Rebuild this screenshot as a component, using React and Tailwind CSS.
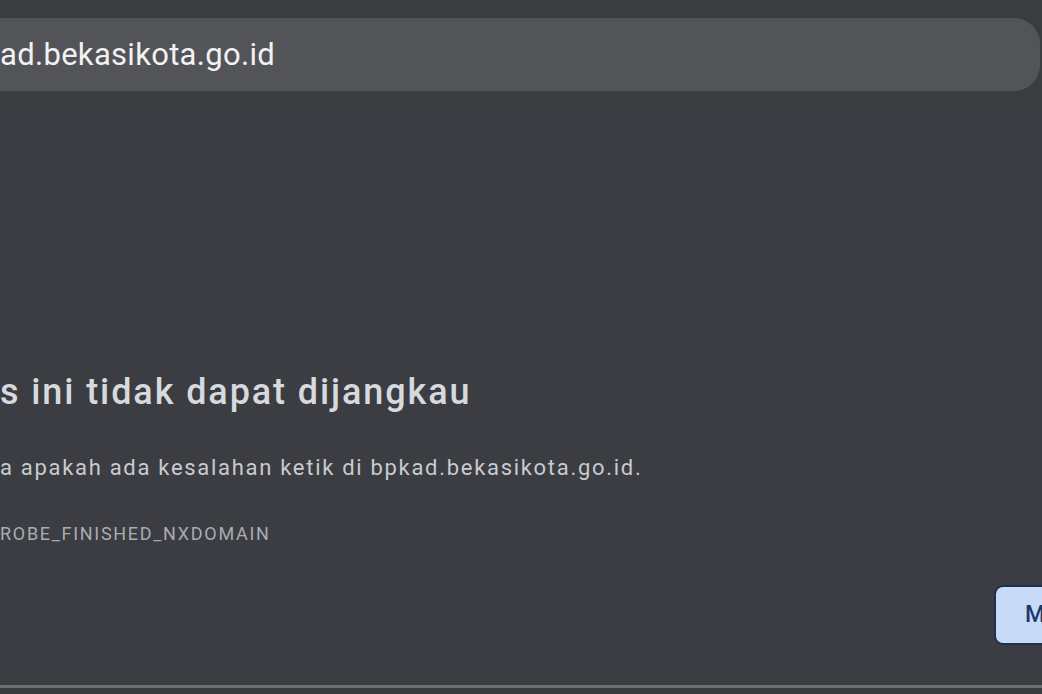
export default function App() {
  return (
    <div
      className="flex h-[694px] w-[1042px] flex-col overflow-hidden bg-[#3c3d43]"
      style={{ fontFamily: "Roboto, 'Noto Sans', sans-serif" }}
    >
      {/* toolbar with the address bar, cut off on the left */}
      <div className="bg-[#3a3d3e] pb-[9px] pt-[18px]">
        <div className="mr-[2px] flex h-[73px] items-center rounded-r-[26px] bg-[#535458]">
          <span className="whitespace-nowrap text-[31px] leading-none tracking-[0.3px] text-[#f1f2f3]">
            ad.bekasikota.go.id
          </span>
        </div>
      </div>

      {/* error page body */}
      <main className="flex flex-1 flex-col">
        <h1 className="mt-[270px] whitespace-nowrap text-[36px] font-medium leading-[44px] tracking-[1.9px] text-[#d6d9dd]">
          s ini tidak dapat dijangkau
        </h1>
        <p className="mt-[40px] whitespace-nowrap text-[22px] leading-[28px] tracking-[1.7px] text-[#c8cbcf]">
          a apakah ada kesalahan ketik di bpkad.bekasikota.go.id.
        </p>
        <p className="mt-[41px] whitespace-nowrap text-[18px] leading-[22px] tracking-[1.7px] text-[#a9acb1]">
          ROBE_FINISHED_NXDOMAIN
        </p>

        <div className="mt-[40px] flex justify-end">
          <button className="-mr-[40px] flex h-[60px] w-[88px] items-center rounded-[9px] border-2 border-[#20304f] bg-[#c8daf6] pl-[29px] text-[23px] font-medium text-[#1b3a6b]">
            M
          </button>
        </div>

        <div className="mt-auto h-[3px] bg-[#6c6d71]" />
        <div className="h-[6px] bg-[#3a3b3f]" />
      </main>
    </div>
  );
}
